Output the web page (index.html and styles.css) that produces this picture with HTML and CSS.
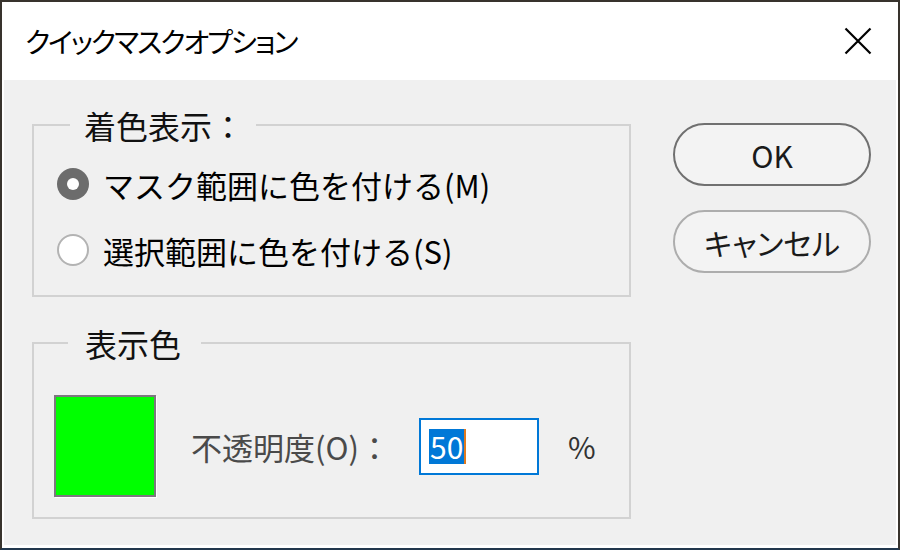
FILE: index.html
```html
<!DOCTYPE html>
<html lang="ja">
<head>
<meta charset="utf-8">
<title>クイックマスクオプション</title>
<link rel="stylesheet" href="styles.css">
</head>
<body>
<div class="window">
  <div class="titlebar">
    <span class="title">クイックマスクオプション</span>
    <span class="close">
      <svg width="28" height="28" viewBox="0 0 28 28"><path d="M1.5 1.5L26.5 26.5M26.5 1.5L1.5 26.5" stroke="#000" stroke-width="2.2" fill="none"/></svg>
    </span>
  </div>
  <div class="content">
    <div class="left">
      <fieldset class="group g1">
        <legend>着色表示：</legend>
        <div class="radios">
          <div class="radio-row"><span class="radio on"></span><span>マスク範囲に色を付ける(M)</span></div>
          <div class="radio-row"><span class="radio off"></span><span>選択範囲に色を付ける(S)</span></div>
        </div>
      </fieldset>
      <fieldset class="group g2">
        <legend>表示色</legend>
        <div class="color-row">
          <div class="swatch"></div>
          <span class="opacity-label">不透明度(O)：</span>
          <div class="field"><span class="sel">50</span><span class="caret"></span></div>
          <span class="pct">%</span>
        </div>
      </fieldset>
    </div>
    <div class="buttons">
      <button class="btn default">OK</button>
      <button class="btn cancel">キャンセル</button>
    </div>
  </div>
</div>
</body>
</html>
```
FILE: styles.css
```css
html, body {
  margin: 0;
  padding: 0;
}
body {
  width: 900px;
  height: 550px;
  overflow: hidden;
  font-family: "Noto Sans CJK JP", "Noto Sans", sans-serif;
  background: #fff;
}
.window {
  box-sizing: border-box;
  width: 900px;
  height: 550px;
  border: 2px solid #38332d;
  border-bottom-color: #22374d;
  background: #fff;
  display: flex;
  flex-direction: column;
  padding: 0 2px 3px 2px;
}
.titlebar {
  height: 78px;
  flex: none;
  display: flex;
  align-items: center;
  justify-content: space-between;
  padding: 0 8px 0 21px;
}
.title {
  font-size: 28px;
  font-feature-settings: "palt";
  letter-spacing: -2px;
  color: #000;
}
.close {
  width: 60px;
  height: 60px;
  display: flex;
  align-items: center;
  justify-content: center;
}
.content {
  flex: 1;
  background: #f0f0f0;
  display: flex;
  gap: 42px;
  padding: 27px 0 0 28px;
}
.left {
  width: 599px;
  display: flex;
  flex-direction: column;
  gap: 28px;
}
.group {
  box-sizing: border-box;
  width: 599px;
  margin: 0;
  border: 2px solid #d2d2d2;
  min-width: 0;
}
.group legend {
  font-size: 32px;
  line-height: 36px;
  color: #111;
}
.g1 {
  padding: 21px 0 25px 23px;
}
.g1 legend {
  margin-left: 13px;
  padding: 0 12px 0 14px;
}
.g2 {
  padding: 34px 0 20px 20px;
}
.g2 legend {
  margin-left: 14px;
  padding: 0 20px 0 17px;
}
.radios {
  display: flex;
  flex-direction: column;
  gap: 26px;
}
.radio-row {
  display: flex;
  align-items: center;
  gap: 14px;
  height: 40px;
  font-size: 31px;
  color: #000;
}
.radio {
  box-sizing: border-box;
  width: 32px;
  height: 32px;
  border-radius: 50%;
  flex: none;
}
.radio.on {
  background: #6c6c6c;
  display: flex;
  align-items: center;
  justify-content: center;
}
.radio.on::after {
  content: "";
  width: 12px;
  height: 12px;
  border-radius: 50%;
  background: #fff;
}
.radio.off {
  background: #fff;
  border: 2px solid #b3b3b3;
}
.color-row {
  display: flex;
  align-items: center;
}
.swatch {
  width: 98px;
  height: 98px;
  border: 2px solid #7d777f;
  background: #00ff00;
  box-shadow: 1px 1px 0 #fff;
  flex: none;
}
.opacity-label {
  margin-left: 35px;
  width: 228px;
  font-size: 31px;
  color: #4a4a4a;
  flex: none;
}
.field {
  box-sizing: border-box;
  width: 120px;
  height: 57px;
  border: 2px solid #0078d7;
  background: #fff;
  display: flex;
  align-items: center;
  padding-left: 8px;
  flex: none;
}
.sel {
  background: #0078d7;
  color: #fff;
  font-size: 30px;
  line-height: 35px;
  padding: 0 1px;
}
.caret {
  width: 2px;
  height: 35px;
  background: #e07a1f;
}
.pct {
  margin-left: 29px;
  font-size: 30px;
  color: #333;
}
.buttons {
  display: flex;
  flex-direction: column;
  gap: 24px;
  padding-top: 16px;
}
.btn {
  box-sizing: border-box;
  width: 198px;
  height: 63px;
  border-radius: 32px;
  border: 2px solid #707070;
  background: #f3f3f3;
  font-family: inherit;
  font-size: 30px;
  color: #1a1a1a;
  padding: 0;
  font-feature-settings: "palt";
}
.btn.cancel {
  border-color: #adadad;
}
```
